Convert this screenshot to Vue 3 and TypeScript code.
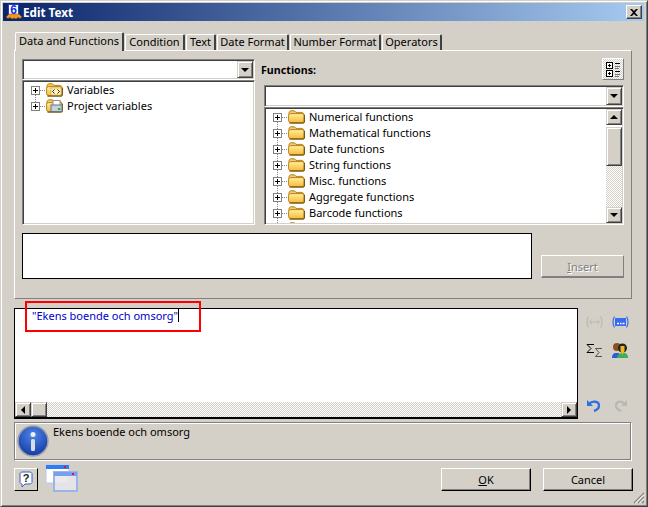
<script setup lang="ts">
interface TreeItem {
  name: string
  label: boolean
}
const tabs: string[] = ['Data and Functions', 'Condition', 'Text', 'Date Format', 'Number Format', 'Operators']
const functions: TreeItem[] = [
  { name: 'Numerical functions', label: true },
  { name: 'Mathematical functions', label: true },
  { name: 'Date functions', label: true },
  { name: 'String functions', label: true },
  { name: 'Misc. functions', label: true },
  { name: 'Aggregate functions', label: true },
  { name: 'Barcode functions', label: true },
  { name: 'more', label: false },
]
</script>

<template>
  <div class="window">
    <svg width="0" height="0" class="defs">
      <defs>
        <linearGradient id="fold" x1="0" y1="0" x2="0" y2="1">
          <stop offset="0" stop-color="#ffeea0" />
          <stop offset="1" stop-color="#f6bc38" />
        </linearGradient>
        <symbol id="folder" viewBox="0 0 17 14">
          <path d="M1 4V2.200L2.500 .8H6.500L8 2.400H14.500L16 4V6H1z" fill="#f8c850" stroke="#b8841e" />
          <rect x="0.600" y="3.600" width="15.400" height="8.900" rx="1.800" fill="url(#fold)" stroke="#b8841e" />
          <path d="M1.500 13.200H15.200L16.500 11.800V5" fill="none" stroke="#7a5818" stroke-width="1.200" />
        </symbol>
      </defs>
    </svg>

    <header class="titlebar">
      <svg class="app-icon" width="16" height="16" viewBox="0 0 16 16">
        <rect x="2.500" y="0.500" width="10" height="11" fill="#fff" stroke="#2040c0" />
        <path d="M0 13l3-3h10l3 3-2 1.500-2-1-2 1.500-2-1-2 1-2-1.500-2 1z" fill="#f09a20" stroke="#7a4a10" stroke-width=".5" />
        <text x="7.500" y="10" text-anchor="middle" class="six">6</text>
      </svg>
      <span class="title">Edit Text</span>
      <button class="close" type="button">
        <svg width="8" height="7" viewBox="0 0 8 7"><path d="M0 0h2l2 2 2-2h2L5 3.500 8 7H6L4 5 2 7H0l3-3.500z" fill="#000" /></svg>
      </button>
    </header>

    <main class="content">
      <nav class="tabs">
        <div v-for="(t, i) in tabs" :key="t" class="tab" :class="{ active: i === 0 }">{{ t }}</div>
      </nav>

      <section class="page">
        <div class="columns">
          <div class="col">
            <div class="combo">
              <span class="combo-field"></span>
              <span class="sbtn"><i class="tri down"></i></span>
            </div>
            <div class="tree tree-left">
              <div class="row">
                <span class="exp"></span>
                <svg class="fold" width="17" height="14" viewBox="0 0 17 14">
                  <use href="#folder" width="17" height="14" />
                  <rect x="5" y="5" width="10" height="7" fill="#fff3c0" stroke="#c8a040" stroke-width=".6" />
                  <path d="M8.500 6.500L6.500 8.500l2 2M11.500 6.500l2 2-2 2" fill="none" stroke="#222" />
                </svg>
                <span class="label">Variables</span>
              </div>
              <div class="row">
                <span class="exp"></span>
                <svg class="fold" width="17" height="14" viewBox="0 0 17 14">
                  <use href="#folder" width="17" height="14" />
                  <rect x="7" y="1.500" width="7" height="5" fill="#fff" stroke="#8a94a0" />
                  <rect x="5" y="6" width="11" height="6.500" fill="#c8d0d8" stroke="#6b7480" />
                  <rect x="12" y="9" width="2.500" height="2" fill="#22b050" />
                </svg>
                <span class="label">Project variables</span>
              </div>
            </div>
          </div>

          <div class="col col-right">
            <div class="fn-head">
              <label class="fn-label">Functions:</label>
              <button class="tree-toggle" type="button">
                <svg width="15" height="15" viewBox="0 0 15 15">
                  <g fill="#fff" stroke="#000">
                    <rect x="0.500" y="0.500" width="6" height="6" />
                    <rect x="0.500" y="8.500" width="6" height="6" />
                  </g>
                  <path d="M2 3.500h3M3.500 2v3M2 11.500h3M3.500 10v3M9 1.500h5M9 9.500h5" stroke="#000" />
                  <path d="M9 4.500h5M9 6.500h4M9 12.500h5M9 14.500h4" stroke="#777" />
                </svg>
              </button>
            </div>
            <div class="combo combo-right">
              <span class="combo-field"></span>
              <span class="sbtn"><i class="tri down"></i></span>
            </div>
            <div class="tree tree-right">
              <div class="tree-rows">
                <div v-for="f in functions" :key="f.name" class="row">
                  <span class="exp"></span>
                  <svg class="fold" width="17" height="14"><use href="#folder" width="17" height="14" /></svg>
                  <span v-if="f.label" class="label">{{ f.name }}</span>
                </div>
              </div>
              <div class="vscroll">
                <span class="sbtn"><i class="tri up"></i></span>
                <span class="vthumb"></span>
                <span class="vtrack"></span>
                <span class="sbtn"><i class="tri down"></i></span>
              </div>
            </div>
          </div>
        </div>

        <div class="desc-row">
          <div class="desc"></div>
          <button class="insert" type="button" disabled><u>I</u>nsert</button>
        </div>
      </section>

      <section class="editor-row">
        <div class="editor">
          <div class="code"><span class="code-text">"Ekens boende och omsorg"</span><i class="caret"></i></div>
          <div class="hscroll">
            <span class="sbtn"><i class="tri left"></i></span>
            <span class="hthumb"></span>
            <span class="htrack"></span>
            <span class="sbtn"><i class="tri right"></i></span>
          </div>
        </div>
        <div class="tools">
          <svg width="17" height="12" viewBox="0 0 17 12" fill="none" stroke="#b8b8b4">
            <path d="M2.500 .5C.5 3.500 .5 8.500 2.500 11.500M14.500 .5c2 3 2 8 0 11" stroke-width="1.200" />
            <path d="M3.500 6h10M6 3.500L3.500 6 6 8.500M11 3.500L13.500 6 11 8.500" />
          </svg>
          <svg width="17" height="12" viewBox="0 0 17 12" fill="none">
            <path d="M2.500 .5C.5 3.500 .5 8.500 2.500 11.500M14.500 .5c2 3 2 8 0 11" stroke="#3a6cf0" stroke-width="1.200" />
            <rect x="3" y="2" width="11" height="8" fill="#3a6cf0" />
            <path d="M5 7.500h2M8 7.500h1.500M10.500 7.500h2" stroke="#fff" stroke-width="1.500" />
          </svg>
          <svg class="tool-2" width="17" height="15" viewBox="0 0 17 15" fill="none">
            <path d="M8 1.500H1L5 5.500 1 9.500h7" stroke="#000" />
            <path d="M16 5.500H9.500L13 9.500l-3.500 4H16" stroke="#555" />
          </svg>
          <svg class="tool-2" width="17" height="15" viewBox="0 0 17 15">
            <path d="M0 15c0-4 2-5 4-5h3v5z" fill="#2a5cd8" />
            <circle cx="5" cy="4" r="4" fill="#8a5220" />
            <path d="M5 15c0-3 2-5 6-5s5 2 5 5z" fill="#3cae58" />
            <circle cx="10.500" cy="5" r="4.500" fill="#222" />
            <path d="M8.500 3h4v5l-2 4-2-4z" fill="#f2b820" />
          </svg>
          <svg class="tool-3" width="17" height="13" viewBox="0 0 17 13" fill="none">
            <path d="M1 1v6h6z" fill="#2f6fe0" />
            <path d="M3 5c3-3.500 10-3 10 1.500 0 2.500-2 4.500-5 5.500" stroke="#2f6fe0" stroke-width="2.300" />
          </svg>
          <svg class="tool-3" width="17" height="13" viewBox="0 0 17 13" fill="none">
            <path d="M15 1v6H9z" fill="#b8b8b4" />
            <path d="M13 5C10 1.500 4 2 4 6.500 4 9 6 11 9 12" stroke="#b8b8b4" stroke-width="2.300" />
          </svg>
        </div>
      </section>

      <section class="info">
        <svg class="info-icon" width="32" height="32" viewBox="0 0 32 32">
          <defs>
            <radialGradient id="ib" cx=".5" cy=".3" r=".8">
              <stop offset="0" stop-color="#4f86e8" />
              <stop offset="1" stop-color="#0c2f9a" />
            </radialGradient>
          </defs>
          <circle cx="16" cy="16" r="15" fill="url(#ib)" stroke="#9aa0aa" stroke-width="1.500" />
          <circle cx="16" cy="9.500" r="2.500" fill="#eef0f4" />
          <rect x="14" y="14" width="4" height="12" rx="1.500" fill="#d8dce4" />
        </svg>
        <span class="info-text">Ekens boende och omsorg</span>
      </section>

      <footer class="bottom">
        <button class="help" type="button">
          <svg width="14" height="17" viewBox="0 0 14 17" fill="#fff" stroke="#3a5cc8">
            <path d="M2.500 1h9L13 2.500v9L11.500 13H6l-3 3v-3h-.5L1 11.500v-9z" />
            <text x="7" y="11" text-anchor="middle" class="q">?</text>
          </svg>
        </button>
        <svg class="win-icon" width="34" height="29" viewBox="0 0 34 29">
          <rect x="1" y="1" width="23" height="18" fill="#fff" stroke="#b4c8f2" />
          <rect x="1" y="1" width="23" height="4" fill="#2f7cf0" />
          <rect x="19" y="2" width="2" height="2" fill="#e01040" />
          <rect x="9" y="8" width="23" height="19" fill="#e6e6ea" fill-opacity=".85" stroke="#9ab4ee" stroke-width="2" />
          <rect x="9" y="8" width="23" height="4" fill="#7a9eee" />
          <rect x="27" y="9" width="2" height="2" fill="#e01060" />
        </svg>
        <span class="spacer"></span>
        <button class="btn" type="button"><u>O</u>K</button>
        <button class="btn btn-cancel" type="button">Cancel</button>
      </footer>
    </main>

    <div class="mark"></div>
    <svg class="grip" width="12" height="12" viewBox="0 0 12 12">
      <path d="M11 1L1 11M11 5L5 11M11 9L9 11" stroke="#808080" stroke-width="1.200" />
      <path d="M11 2.500L2.500 11M11 6.500L6.500 11" stroke="#fff" stroke-width="1" />
    </svg>
  </div>
</template>

<style>
html, body { margin: 0; padding: 0; background: #d4d0c8; }
</style>

<style scoped>
.window {
  position: relative;
  width: 648px;
  height: 507px;
  box-sizing: border-box;
  border: 1px solid;
  border-color: #d4d0c8 #404040 #404040 #d4d0c8;
  box-shadow: inset 1px 1px #fff, inset -1px -1px #808080;
  padding: 2px 3px 2px 2px;
  background: #d4d0c8;
  font-family: "Noto Sans", "Liberation Sans", sans-serif;
  font-size: 11px;
  color: #000;
  overflow: hidden;
}
.defs { position: absolute; }
.titlebar {
  height: 18px;
  display: flex;
  align-items: center;
  padding: 0 2px 0 3px;
  background: linear-gradient(90deg, #0a246a, #a6caf0);
}
.app-icon { flex: none; }
.six { font: bold 12px "Liberation Sans", sans-serif; fill: #1030e0; }
.title {
  margin-left: 1px;
  font-size: 11.7px;
  font-weight: 700;
  color: #fff;
  flex: 1;
}
.close {
  width: 16px;
  height: 14px;
  padding: 0;
  display: flex;
  align-items: center;
  justify-content: center;
  background: #d4d0c8;
  border: 1px solid;
  border-color: #fff #404040 #404040 #fff;
  box-shadow: inset -1px -1px #808080;
}
.content {
  padding: 11px 0 0 11px;
  display: flex;
  flex-direction: column;
  align-items: flex-start;
}
.tabs {
  display: flex;
  align-items: flex-end;
  height: 18px;
  padding-left: 1px;
  position: relative;
  z-index: 1;
}
.tab {
  height: 16px;
  box-sizing: border-box;
  border: 1px solid #fff;
  border-right: 2px solid #404040;
  border-bottom: 0;
  margin-right: 1px;
  text-align: center;
  line-height: 13px;
  white-space: nowrap;
  border-top-left-radius: 2px;
  border-top-right-radius: 2px;
}
.tab:nth-child(1) { width: 109px; }
.tab:nth-child(2) { width: 60px; }
.tab:nth-child(3) { width: 30px; }
.tab:nth-child(4) { width: 72px; }
.tab:nth-child(5) { width: 91px; }
.tab:nth-child(6) { width: 60px; }
.tab.active {
  height: 19px;
  margin-bottom: -1px;
  line-height: 15px;
  background: #d4d0c8;
}
.page {
  width: 618px;
  height: 249px;
  box-sizing: border-box;
  border: 1px solid;
  border-color: #fff #808080 #808080 #fff;
  padding: 8px 0 0 7px;
}
.columns {
  display: grid;
  grid-template-columns: 233px 360px;
  column-gap: 9px;
}
.col { display: flex; flex-direction: column; min-width: 0; }
.col-right { margin-top: -1px; }
.combo, .tree {
  box-sizing: border-box;
  border: 1px solid;
  border-color: #808080 #fff #fff #808080;
  box-shadow: inset 1px 1px #404040, inset -1px -1px #d4d0c8;
  background: #fff;
  padding: 1px;
}
.combo { display: flex; height: 21px; justify-content: flex-end; }
.combo-field { flex: 1; }
.combo-right { height: 22px; }
.sbtn {
  flex: none;
  width: 16px;
  min-height: 16px;
  box-sizing: border-box;
  display: flex;
  align-items: center;
  justify-content: center;
  background: #d4d0c8;
  border: 1px solid;
  border-color: #d4d0c8 #404040 #404040 #d4d0c8;
  box-shadow: inset 1px 1px #fff, inset -1px -1px #808080;
}
.tri { display: block; width: 0; height: 0; border-style: solid; border-color: transparent; }
.tri.down { border-width: 4px 4px 0; border-top-color: #000; }
.tri.up { border-width: 0 4px 4px; border-bottom-color: #000; }
.tri.left { border-width: 4px 4px 4px 0; border-right-color: #000; }
.tri.right { border-width: 4px 0 4px 4px; border-left-color: #000; }
.tree { overflow: hidden; }
.tree-left { height: 145px; }
.tree-right { height: 118px; display: flex; }
.tree-rows { flex: 1; overflow: hidden; }
.row {
  display: flex;
  align-items: center;
  height: 16px;
  padding-left: 7px;
  white-space: nowrap;
}
.exp {
  position: relative;
  flex: none;
  width: 9px;
  height: 9px;
  box-sizing: border-box;
  border: 1px solid #808080;
  background:
    linear-gradient(#000, #000) center / 5px 1px no-repeat,
    linear-gradient(#000, #000) center / 1px 5px no-repeat,
    #fff;
}
.exp::after {
  content: "";
  position: absolute;
  left: 8px;
  top: 3px;
  width: 5px;
  border-top: 1px dotted #808080;
}
.row + .row .exp::before {
  content: "";
  position: absolute;
  left: 3px;
  top: -8px;
  height: 7px;
  border-left: 1px dotted #808080;
}
.fold { flex: none; margin-left: 6px; }
.label { margin-left: 4px; position: relative; top: -1px; }
.vscroll { flex: none; width: 16px; display: flex; flex-direction: column; }
.vthumb {
  height: 39px;
  margin-top: 2px;
  box-sizing: border-box;
  border: 1px solid;
  border-color: #d4d0c8 #404040 #404040 #d4d0c8;
  box-shadow: inset 1px 1px #fff, inset -1px -1px #808080;
  background: #d4d0c8;
}
.vtrack, .htrack {
  flex: 1;
  background-image: conic-gradient(#fff 25%, #d4d0c8 0 50%, #fff 0 75%, #d4d0c8 0);
  background-size: 2px 2px;
}
.fn-head { display: flex; justify-content: space-between; align-items: flex-end; height: 27px; }
.fn-label { font-weight: 700; font-size: 10.7px; margin-left: -3px; margin-bottom: 8px; line-height: 13px; }
.tree-toggle {
  width: 22px;
  height: 22px;
  padding: 0;
  margin-bottom: 5px;
  display: flex;
  align-items: center;
  justify-content: center;
  border: 1px solid;
  border-color: #fff #808080 #808080 #fff;
  background-image: conic-gradient(#fff 25%, #d4d0c8 0 50%, #fff 0 75%, #d4d0c8 0);
  background-size: 2px 2px;
}
.desc-row { display: flex; align-items: flex-end; margin-top: 8px; }
.desc {
  width: 510px;
  height: 46px;
  box-sizing: border-box;
  border: 1px solid #000;
  background: #fff;
}
.insert {
  width: 83px;
  height: 23px;
  margin: 0 0 1px 9px;
  padding: 0;
  font: inherit;
  color: #808080;
  text-shadow: 1px 1px #fff;
  background: #d4d0c8;
  border: 1px solid;
  border-color: #fff #808080 #808080 #fff;
  border-width: 1px 1px 2px 1px;
}
.editor-row { display: flex; margin-top: 9px; }
.editor {
  flex: none;
  width: 564px;
  height: 111px;
  box-sizing: border-box;
  border: 1px solid #000;
  border-bottom-width: 2px;
  background: #fff;
  display: flex;
  flex-direction: column;
}
.code {
  flex: 1;
  padding: 0 0 0 17px;
  line-height: 13px;
  display: flex;
  align-items: flex-start;
}
.code-text { color: #0000cc; }
.caret { display: block; width: 1px; height: 13px; background: #000; }
.hscroll { display: flex; height: 15px; }
.hscroll .sbtn { min-height: 0; }
.hthumb {
  width: 16px;
  flex: none;
  box-sizing: border-box;
  border: 1px solid;
  border-color: #d4d0c8 #404040 #404040 #d4d0c8;
  box-shadow: inset 1px 1px #fff, inset -1px -1px #808080;
  background: #d4d0c8;
}
.tools {
  display: grid;
  grid-template-columns: 17px 17px;
  column-gap: 9px;
  align-content: start;
  margin-left: 8px;
  padding-top: 8px;
}
.tools svg { display: block; }
.tool-2 { margin-top: 15px; }
.tool-3 { margin-top: 41px; }
.info {
  width: 618px;
  height: 39px;
  margin-top: 3px;
  box-sizing: border-box;
  border: 1px solid;
  border-color: #808080 #fff #fff #808080;
  box-shadow: inset -1px -1px #808080, inset 1px 1px #fff;
  display: flex;
  align-items: flex-start;
  padding: 2px 0 0 2px;
}
.info-icon { flex: none; }
.info-text { margin-left: 4px; line-height: 13px; }
.bottom {
  width: 619px;
  height: 29px;
  margin-top: 7px;
  display: flex;
  align-items: flex-start;
}
.help {
  width: 24px;
  height: 23px;
  padding: 0;
  display: flex;
  align-items: center;
  justify-content: center;
  background: #d4d0c8;
  border: 1px solid;
  border-color: #fff #000 #000 #fff;
}
.q { font: bold 11px "Liberation Sans", sans-serif; fill: #222; stroke: none; }
.win-icon { margin: -4px 0 0 7px; }
.spacer { flex: 1; }
.btn {
  width: 90px;
  height: 23px;
  padding: 0;
  font: inherit;
  color: #000;
  background: #d4d0c8;
  border: 1px solid;
  border-color: #fff #000 #000 #fff;
  box-shadow: inset -1px -1px #808080;
}
.btn-cancel { margin-left: 12px; }
.mark {
  position: absolute;
  left: 24px;
  top: 300px;
  width: 172px;
  height: 27px;
  border: 2px solid #f00;
}
.grip { position: absolute; right: 2px; bottom: 2px; }
</style>
